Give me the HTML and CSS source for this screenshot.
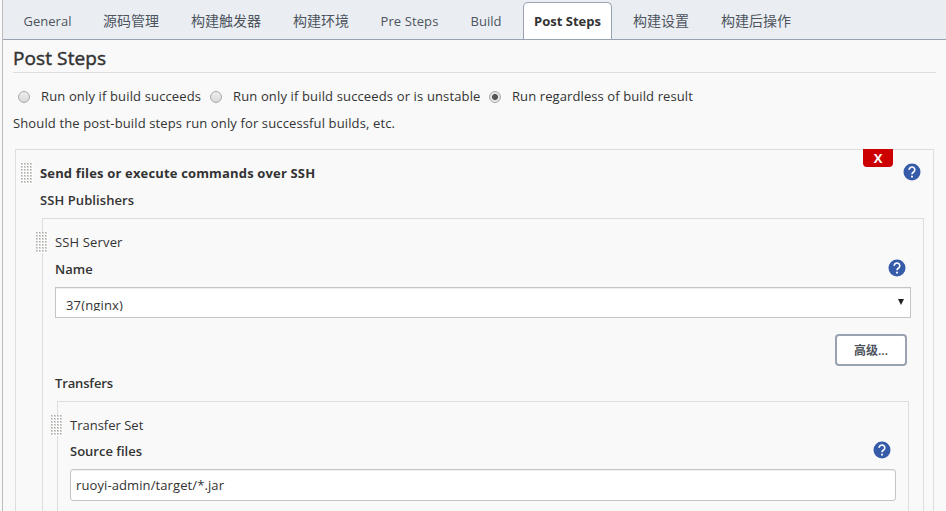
FILE: index.html
```html
<!DOCTYPE html>
<html lang="zh-CN">
<head>
<meta charset="utf-8">
<title>Post Steps</title>
<link rel="stylesheet" href="styles.css">
</head>
<body>
<svg class="defs" width="0" height="0">
  <symbol id="help" viewBox="0 0 18 18">
    <circle cx="9" cy="9" r="8.5" fill="#355ba9"/>
    <path d="M6.2 6.9a2.8 2.7 0 1 1 4.6 1.900C9.700 9.700 9 9.900 9 11.300" fill="none" stroke="#fff" stroke-width="1.6"/>
    <rect x="8.100" y="12.700" width="1.800" height="1.800" fill="#fff"/>
  </symbol>
</svg>
<main class="config">
  <nav class="tabs">
    <a class="tab t-general">General</a>
    <a class="tab t-four">源码管理</a>
    <a class="tab t-five">构建触发器</a>
    <a class="tab t-four">构建环境</a>
    <a class="tab t-pre">Pre Steps</a>
    <a class="tab t-build">Build</a>
    <a class="tab active">Post Steps</a>
    <a class="tab t-four">构建设置</a>
    <a class="tab t-five">构建后操作</a>
  </nav>
  <section class="content">
    <h1>Post Steps</h1>
    <div class="radios">
      <label class="choice c-one"><i class="radio"></i><span>Run only if build succeeds</span></label>
      <label class="choice c-two"><i class="radio"></i><span>Run only if build succeeds or is unstable</span></label>
      <label class="choice c-three"><i class="radio checked"></i><span>Run regardless of build result</span></label>
    </div>
    <p class="note">Should the post-build steps run only for successful builds, etc.</p>

    <div class="chunk outer">
      <i class="grip"></i>
      <button class="delete">X</button>
      <div class="row heading"><b>Send files or execute commands over SSH</b><svg class="help"><use href="#help"/></svg></div>
      <div class="row label publishers">SSH Publishers</div>
      <div class="chunk server">
        <i class="grip"></i>
        <div class="row server-title">SSH Server</div>
        <div class="row label name"><span>Name</span><svg class="help"><use href="#help"/></svg></div>
        <div class="select"><span class="value">37(nginx)</span><svg class="arrow" viewBox="0 0 6 6"><path d="M0 0h6L3 6z" fill="#222"/></svg></div>
        <div class="actions"><button class="advanced">高级...</button></div>
        <div class="row label transfers">Transfers</div>
        <div class="chunk set">
          <i class="grip"></i>
          <div class="row set-title">Transfer Set</div>
          <div class="row label source"><span>Source files</span><svg class="help"><use href="#help"/></svg></div>
          <div class="input">ruoyi-admin/target/*.jar</div>
        </div>
      </div>
    </div>
  </section>
</main>
</body>
</html>
```
FILE: styles.css
```css
* { box-sizing: border-box; }
body {
  margin: 0;
  height: 511px;
  overflow: hidden;
  background: #f9f9f9;
  color: #333;
  font: 13px/20px "Open Sans", "Noto Sans CJK SC", sans-serif;
  white-space: nowrap;
}
.defs { position: absolute; }
.config { margin-left: 2px; height: 511px; border-left: 1px solid #bbb; }
.tabs {
  display: flex;
  height: 40px;
  padding: 2px 0 0 5px;
  background: #eaeef3;
  border-bottom: 1px solid #98a2b0;
}
.tab { height: 37px; line-height: 38px; text-align: center; color: #4d545d; }
.t-general { width: 79px; letter-spacing: .05px; }
.t-four { width: 88px; font-size: 14px; }
.t-five { width: 102px; font-size: 14px; }
.t-pre { width: 89px; letter-spacing: .1px; }
.t-build { width: 64px; }
.tab.active {
  width: 89px;
  margin: 0 5px;
  line-height: 36px;
  font-weight: 700;
  letter-spacing: .02px;
  color: #333;
  background: #fff;
  border: 1px solid #98a2b0;
  border-bottom: 0;
  border-radius: 5px 5px 0 0;
}
.content { padding: 0 10px; }
h1 {
  margin: 0;
  height: 33px;
  border-bottom: 1px solid #ddd;
  font-size: 19px;
  line-height: 37px;
  font-weight: 400;
  letter-spacing: .1px;
  -webkit-text-stroke: .45px #333;
}
.radios { display: flex; height: 20px; margin-top: 13px; padding-left: 5px; }
.choice { display: flex; align-items: center; gap: 11px; letter-spacing: .14px; }
.c-one { width: 192px; }
.c-two { width: 279px; }
.c-three { letter-spacing: .1px; }
.radio {
  width: 12px;
  height: 12px;
  margin-top: 2px;
  border: 1px solid #aaa;
  border-radius: 50%;
  background: linear-gradient(#eee, #d8d8d8);
}
.radio.checked { background: radial-gradient(circle, #555 0 2.6px, #e6e6e6 3.4px); }
.note { margin: 7px 0 0; height: 20px; letter-spacing: .13px; }
.chunk { position: relative; border: 1px solid #ddd; border-bottom: 0; }
.outer { margin: 16px 2px 0; height: 362px; padding: 13px 9px 0 24px; }
.row { display: flex; justify-content: space-between; height: 20px; }
.label { font-weight: 600; }
.grip {
  position: absolute;
  left: 5px;
  top: 13px;
  width: 12px;
  height: 21px;
  background:
    conic-gradient(at 1px 1px, transparent 0 75%, #aaa 0) 0 0 / 3px 3px,
    conic-gradient(at 2px 2px, transparent 0 75%, #d4d4d0 0) 0 0 / 3px 3px,
    #fdfdfd;
}
.help { width: 18px; height: 18px; flex: none; }
.heading b { letter-spacing: .16px; }
.heading .help { margin-right: 3px; }
.delete {
  position: absolute;
  top: -1px;
  right: 40px;
  width: 30px;
  height: 18px;
  padding: 0;
  border: 0;
  border-radius: 0 0 4px 4px;
  background: #c00;
  color: #fff;
  font: bold 13px/18px "Open Sans", sans-serif;
}
.publishers { margin-top: 7px; letter-spacing: .08px; }
.server { margin: 8px 0 0 2px; height: 293px; padding: 13px 12px 0; }
.server > .grip, .set > .grip { left: -7px; }
.server-title { letter-spacing: .15px; }
.name { margin-top: 7px; }
.name .help, .source .help { margin-right: 5px; }
.select {
  display: flex;
  justify-content: space-between;
  height: 31px;
  margin-top: 8px;
  padding: 0 6px 0 10px;
  border: 1px solid #c5c5c5;
  background: #fff;
  box-shadow: inset 0 1px 1px #0001;
}
.value { height: 23px; line-height: 35px; overflow: hidden; letter-spacing: .15px; }
.arrow { width: 6px; height: 6px; margin-top: 11px; }
.actions { display: flex; justify-content: flex-end; margin: 16px 4px 0 0; }
.advanced {
  width: 72px;
  height: 32px;
  padding: 0;
  border: 2px solid #98a2b0;
  border-radius: 4px;
  background: #fff;
  color: #4d545d;
  font: 600 12px/30px "Open Sans", "Noto Sans CJK SC", sans-serif;
}
.transfers { margin-top: 7px; letter-spacing: -.15px; }
.set { margin: 8px 2px 0; height: 110px; padding: 13px 12px 0; }
.source { margin-top: 6px; }
.input {
  height: 32px;
  margin-top: 8px;
  padding: 0 5px;
  border: 1px solid #c5c5c5;
  border-radius: 3px;
  background: #fff;
  line-height: 30px;
  letter-spacing: .1px;
  box-shadow: inset 0 1px 1px #0001;
}
```
